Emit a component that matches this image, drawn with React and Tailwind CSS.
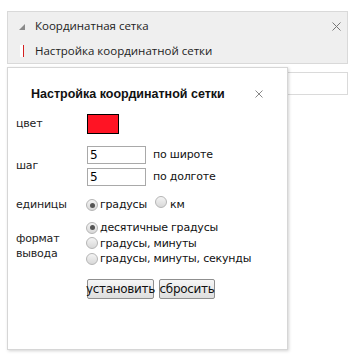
import React from "react";

function Radio({ checked }) {
  return (
    <span className="inline-block w-[12px] h-[12px] rounded-full border border-[#b5b5b5] bg-gradient-to-b from-[#f4f4f4] to-[#d8d8d8] relative shrink-0">
      {checked && (
        <span className="absolute left-[2.5px] top-[2.5px] w-[5px] h-[5px] rounded-full bg-[#555]" />
      )}
    </span>
  );
}

function Btn({ children, w }) {
  return (
    <button className={`h-[20px] ${w} border border-[#8f8f8f] rounded-[2px] bg-gradient-to-b from-[#f6f6f6] to-[#dedede] text-[12px] leading-[18px] text-[#111] px-0 flex items-center justify-center whitespace-nowrap tracking-[-0.3px]`}>
      {children}
    </button>
  );
}

export default function App() {
  return (
    <div className="w-[353px] h-[357px] bg-white relative overflow-hidden font-['DejaVu_Sans',sans-serif]">
      <div className="pt-[11px] pl-[7px] w-[348px]">
        <div className="h-[53px] bg-[#efefef] border border-[#d9d9d9] relative font-['Open_Sans',sans-serif]">
          <div className="flex items-center h-[26px] pt-[2px]">
            <svg width="6" height="6" viewBox="0 0 6 6" className="ml-[11px] mt-[1px]">
              <polygon points="6,0 6,6 0,6" fill="#8a8a8a" />
            </svg>
            <span className="ml-[10px] text-[11.5px] text-[#222] leading-[16px]">Координатная сетка</span>
            <span className="ml-auto mr-[6px]">
              <svg width="9" height="9" viewBox="0 0 9 9">
                <path d="M0.5 0.5 L8.5 8.5 M8.5 0.5 L0.5 8.5" stroke="#777" strokeWidth="1" />
              </svg>
            </span>
          </div>
          <div className="flex items-center h-[26px]">
            <span className="ml-[12px] w-[4px] h-[12px] bg-white border-r border-[#d42020]" />
            <span className="ml-[11px] text-[11.5px] text-[#222] leading-[16px]">Настройка координатной сетки</span>
          </div>
        </div>
        <div className="mt-[8px] h-[23px] border border-[#dadada] bg-white" />
      </div>

      <div className="absolute left-[7px] top-[67px] w-[281px] h-[283px] bg-white border border-[#d6d6d6] shadow-[1px_1px_3px_rgba(0,0,0,0.18)]">
        <div className="flex items-center h-[16px] mt-[18px] pl-[23px]">
          <span className="text-[12.5px] font-bold text-[#111] leading-[16px] font-['Liberation_Sans',sans-serif]">
            Настройка координатной сетки
          </span>
          <span className="ml-auto mr-[24px]">
            <svg width="8" height="8" viewBox="0 0 8 8">
              <path d="M0.5 0.5 L7.5 7.5 M7.5 0.5 L0.5 7.5" stroke="#888" strokeWidth="1" />
            </svg>
          </span>
        </div>

        <div className="pl-[8px] text-[11px] text-[#222] tracking-[-0.2px]">
          <div className="flex items-center mt-[12px] h-[20px]">
            <span className="w-[71px]">цвет</span>
            <span className="w-[32px] h-[20px] border border-black bg-[#ff1424]" />
          </div>

          <div className="flex items-center mt-[12px]">
            <span className="w-[71px]">шаг</span>
            <div className="flex flex-col gap-[4px]">
              <div className="flex items-center">
                <div className="w-[59px] h-[18px] border border-[#a9a9a9] text-[12px] leading-[16px] pl-[2px] text-black">5</div>
                <span className="ml-[7px] text-[#111]">по широте</span>
              </div>
              <div className="flex items-center">
                <div className="w-[59px] h-[18px] border border-[#a9a9a9] text-[12px] leading-[16px] pl-[2px] text-black">5</div>
                <span className="ml-[7px] text-[#111]">по долготе</span>
              </div>
            </div>
          </div>

          <div className="flex items-center mt-[11px] h-[16px]">
            <span className="w-[70px]">единицы</span>
            <Radio checked />
            <span className="ml-[2px] text-[#111]">градусы</span>
            <span className="ml-[8px]"><Radio /></span>
            <span className="ml-[3px] text-[#111]">км</span>
          </div>

          <div className="flex items-center mt-[7px]">
            <div className="w-[70px] leading-[15px] pt-[6px]">
              <div>формат</div>
              <div>вывода</div>
            </div>
            <div className="flex flex-col leading-[15.5px] text-[#111]">
              <div className="flex items-center h-[15.5px]"><Radio checked /><span className="ml-[2px]">десятичные градусы</span></div>
              <div className="flex items-center h-[15.5px]"><Radio /><span className="ml-[2px]">градусы, минуты</span></div>
              <div className="flex items-center h-[15.5px]"><Radio /><span className="ml-[2px]">градусы, минуты, секунды</span></div>
            </div>
          </div>

          <div className="flex mt-[12px] ml-[71px] gap-[5px]">
            <Btn w="w-[67px]">установить</Btn>
            <Btn w="w-[56px]">сбросить</Btn>
          </div>
        </div>
      </div>
    </div>
  );
}
